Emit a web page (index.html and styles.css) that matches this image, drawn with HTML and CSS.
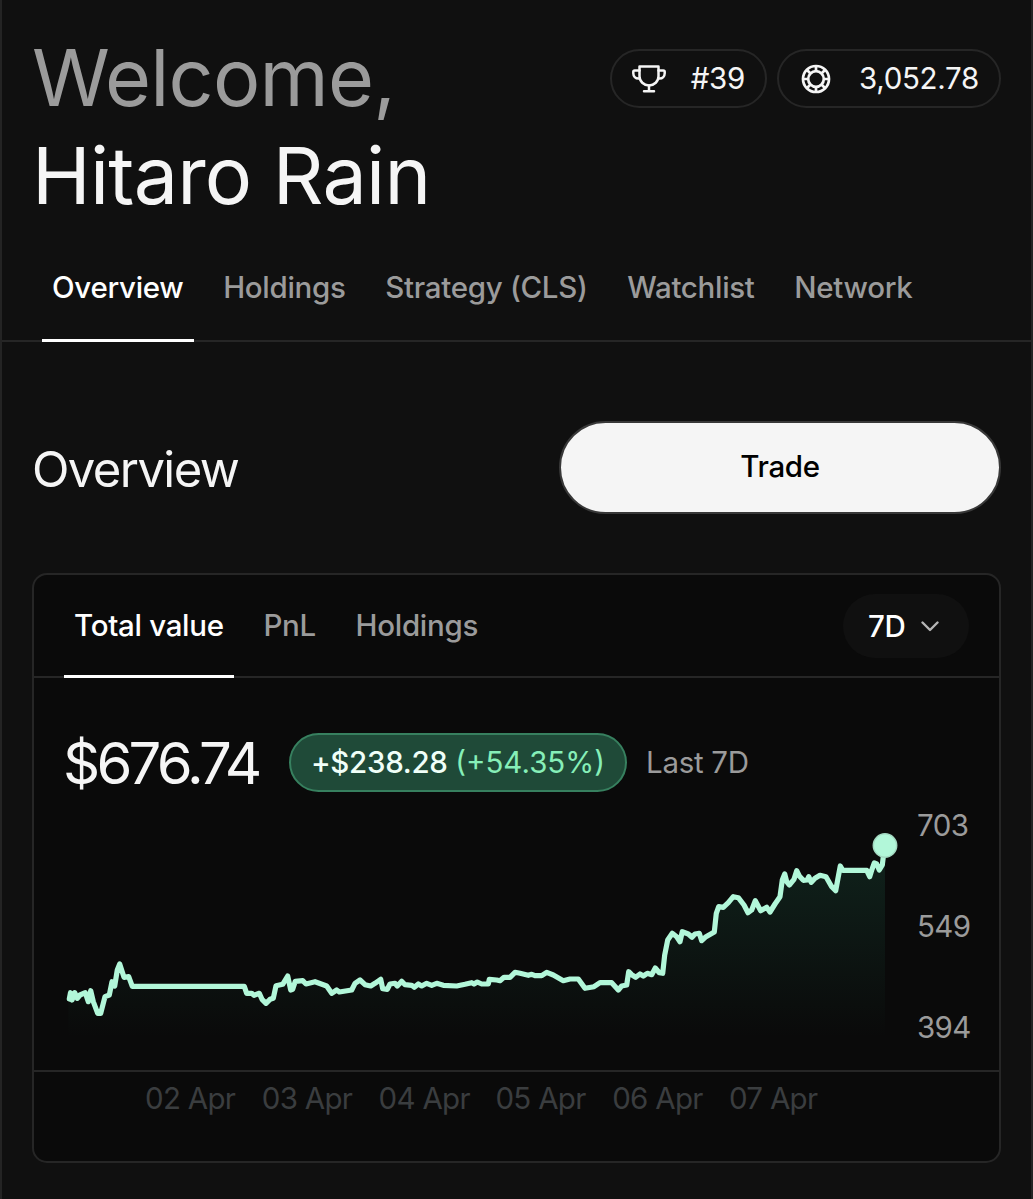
FILE: index.html
```html
<!DOCTYPE html>
<html lang="en">
<head>
    <meta charset="UTF-8">
    <meta name="viewport" content="width=device-width, initial-scale=1.0">
    <title>Portfolio</title>
    <link rel="stylesheet" href="styles.css">
</head>
<body>
    <div class="page">
        <header class="header">
            <h1 class="welcome"><span class="muted">Welcome,</span><br>Hitaro Rain</h1>
            <div class="stats">
                <div class="pill rank">
                    <svg class="trophy" viewBox="0 0 34 28" fill="none" stroke="currentColor" stroke-width="2.5" stroke-linejoin="round" stroke-linecap="round">
                        <path d="M7.5 1.6h19v9.6c0 5.2-4.2 9.2-9.5 9.2s-9.5-4-9.5-9.2z"/>
                        <path d="M7.5 5.4H2.6a1.3 1.3 0 0 0-1.3 1.3v1.6c0 3 2.2 5.2 5.2 5.2h1.2"/>
                        <path d="M26.5 5.4h4.9a1.3 1.3 0 0 1 1.3 1.3v1.6c0 3-2.2 5.2-5.2 5.2h-1.2"/>
                        <path d="M17 20.6v5.6M12 26.2h10"/>
                    </svg>
                    <span>#39</span>
                </div>
                <div class="pill points">
                    <svg class="chip" viewBox="0 0 30 30" fill="none" stroke="currentColor" stroke-width="2.7">
                        <circle cx="15" cy="15" r="13"/>
                        <circle cx="15" cy="15" r="7.8"/>
                        <path d="M15 2v5.2M15 22.8V28M2 15h5.2M22.8 15H28M5.8 5.8l3.7 3.7M20.5 20.5l3.7 3.7M24.2 5.8l-3.7 3.7M9.5 20.5l-3.7 3.7"/>
                    </svg>
                    <span>3,052.78</span>
                </div>
            </div>
        </header>

        <nav class="tabs main-tabs">
            <a class="tab active">Overview</a>
            <a class="tab">Holdings</a>
            <a class="tab">Strategy (CLS)</a>
            <a class="tab">Watchlist</a>
            <a class="tab">Network</a>
        </nav>

        <section class="title-row">
            <h2>Overview</h2>
            <button class="trade">Trade</button>
        </section>

        <section class="card">
            <div class="tabs card-tabs">
                <a class="tab active">Total value</a>
                <a class="tab">PnL</a>
                <a class="tab">Holdings</a>
                <button class="range">
                    7D
                    <svg class="chevron" viewBox="0 0 18 11" fill="none" stroke="currentColor" stroke-width="2.4" stroke-linecap="round" stroke-linejoin="round">
                        <path d="M1.5 1.5L9 9l7.5-7.5"/>
                    </svg>
                </button>
            </div>

            <div class="summary">
                <span class="total">$676.74</span>
                <span class="change">+$238.28 <em>(+54.35%)</em></span>
                <span class="period">Last 7D</span>
            </div>

            <div class="chart">
                <svg class="plot" viewBox="34 810 866 260">
                    <defs>
                        <linearGradient id="fade" gradientUnits="userSpaceOnUse" x1="0" y1="845" x2="0" y2="1037">
                            <stop offset="0" stop-color="#1d5c46" stop-opacity="0.3"/>
                            <stop offset="1" stop-color="#1d5c46" stop-opacity="0"/>
                        </linearGradient>
                        <path id="line" d="M69.3 999L70.5 992.7 72 1000 74.7 992.7 77.3 998.3 80 995 85.3 992.7 88.3 1001.7 90.7 990.7 93.3 1001.7 97.7 1013.3 100.7 1013.3 105 996.7 109.3 995 112 981.7 114.7 986 117.3 970 119.7 964 124 977.3 128.7 976.7 132.3 986.3 244.3 986.3 246.7 993.3 251.7 993.3 254 995.3 259.3 993.3 262 999.3 266 1003.3 270 999.3 273.3 998.3 276 985.7 282.7 984.3 287.7 976 290.7 990 292.7 989.3 295.3 981.3 302.7 980.7 306 984 315 981.7 326.7 986 331.7 993.3 336.7 990 339.3 992 351.7 990 355 983.3 360 980 365 984.7 370.7 986 375 983.3 380.7 979.3 382.7 988.7 387.3 989.3 390 984 395 983.3 397.3 986 401.7 981.3 405 984.7 411.7 985.3 414.3 987.3 418.3 984 421.7 986 426.7 983.3 431.7 985.3 436.7 983.3 443.3 985.3 456.7 986 465 984.3 471.7 982.7 474 984 477.3 982 481.7 984 488.3 984 489.3 979.3 496.7 980 500 980.7 504 977.3 510 977.3 515 972.3 520 973.3 528.3 975.3 531.7 974.3 535 975.7 541.7 975.7 546.7 972.3 553.3 975 563.3 980.7 570 979 578.3 979 585 988.3 594 986.7 600 982.7 611.7 982.7 618.3 990 621.7 986 626.7 985 628.7 971.7 631.7 974.7 635.7 977.3 640 974 643.3 976 647.3 973.3 651.7 974.7 655.3 968 659.3 972.7 662.7 973.3 664.7 955 667.7 940 672.3 933.3 676.7 936.7 680 941.7 682.3 931.7 688.3 934 692 937.3 695 934 699.3 933.3 701.7 940.7 706 936.7 714.3 932 716.3 913.3 718.7 906.7 723.3 907.3 728.3 902.7 733.3 896.7 738.3 897.7 744 905 748 912.7 751.7 910 755.3 900.7 760.7 910.7 766.7 907.3 770 912 775 904 780 896.7 782.3 880 784.7 874 786.7 881.7 789.3 885 794 879.3 796.7 870.7 799.3 876 803.3 880.3 807.3 880 808.7 876.7 811.3 882.3 815 878.3 820 875.3 826 876.7 831.7 886.7 835.7 890.7 838 878.3 840.3 866 842.7 870.3 866.7 870.3 869.7 876.7 872 869.3 874.3 863 876.7 864 879.3 870 882.3 865 883.3 856.7 885 845.3"/>
                        <clipPath id="under">
                            <path d="M68.3 1037V1000L70 992.7 72 1000 80 995 85.3 992.7 88.3 1001.7 90.7 990.7 97.7 1013.3 100.7 1013.3 105 996.7 109.3 995 119.7 964 124 977.3 132.3 986.3 244.3 986.3 246.7 993.3 259.3 993.3 266 1003.3 273.3 998.3 276 985.7 287.7 976 292.7 989.3 295.3 981.3 315 981.7 326.7 986 331.7 993.3 351.7 990 360 980 370.7 986 380.7 979.3 387.3 989.3 390 984 456.7 986 488.3 984 489.3 979.3 504 977.3 515 972.3 541.7 975.7 546.7 972.3 563.3 980.7 578.3 979 585 988.3 600 982.7 611.7 982.7 618.3 990 626.7 985 628.7 971.7 635.7 977.3 655.3 968 662.7 973.3 667.7 940 672.3 933.3 680 941.7 682.3 931.7 699.3 933.3 701.7 940.7 714.3 932 718.7 906.7 733.3 896.7 738.3 897.7 748 912.7 755.3 900.7 760.7 910.7 770 912 780 896.7 784.7 874 789.3 885 796.7 870.7 803.3 880.3 811.3 882.3 820 875.3 826 876.7 835.7 890.7 840.3 866 842.7 870.3 866.7 870.3 869.7 876.7 874.3 863 879.3 870 885 845.3V1037z"/>
                        </clipPath>
                    </defs>
                    <rect x="68" y="840" width="817" height="197" fill="url(#fade)" clip-path="url(#under)"/>
                    <use href="#line" class="line"/>
                    <circle cx="885" cy="845.5" r="11.7" class="dot"/>
                </svg>
                <div class="y-axis">
                    <span>703</span>
                    <span>549</span>
                    <span>394</span>
                </div>
            </div>

            <div class="x-axis">
                <span>02 Apr</span>
                <span>03 Apr</span>
                <span>04 Apr</span>
                <span>05 Apr</span>
                <span>06 Apr</span>
                <span>07 Apr</span>
            </div>
        </section>
    </div>
</body>
</html>
```
FILE: styles.css
```css
* {
    box-sizing: border-box;
}

body {
    margin: 0;
    background-color: #101010;
    color: #f5f5f5;
    font-family: Inter, sans-serif;
    font-size: 29.5px;
    letter-spacing: -0.3px;
}

h1, h2 {
    margin: 0;
    font-weight: 400;
}

button {
    font-family: inherit;
    font-size: inherit;
    letter-spacing: inherit;
    padding: 0;
    cursor: pointer;
}

svg {
    display: block;
}

.page {
    height: 1199px;
    border-left: 2px solid #242424;
    border-right: 2px solid #242424;
    overflow: hidden;
}

/* header */
.header {
    display: flex;
    justify-content: space-between;
    height: 234px;
    padding: 28px 30px 0 30px;
}

.welcome {
    font-size: 79px;
    line-height: 98px;
    letter-spacing: -0.8px;
    white-space: nowrap;
}

.muted {
    color: #9b9b9b;
}

.stats {
    display: flex;
    gap: 10px;
    margin-top: 21px;
}

.pill {
    display: flex;
    align-items: center;
    justify-content: space-between;
    height: 59px;
    padding: 0 20px;
    border: 2px solid #262626;
    border-radius: 30px;
}

.pill span {
    padding-bottom: 1px;
}

.rank {
    width: 157px;
}

.points {
    width: 224px;
}

.trophy {
    width: 34px;
    height: 28px;
}

.chip {
    width: 30px;
    height: 30px;
    margin-left: 2px;
}

/* tabs */
.tabs {
    display: flex;
    border-bottom: 2px solid #262626;
}

.tab {
    padding: 0 10px;
    margin-right: 19.7px;
    color: #9b9b9b;
    font-weight: 500;
    white-space: nowrap;
}

.active {
    color: #fff;
    border-bottom: 3px solid #fff;
    margin-bottom: -2px;
}

.main-tabs {
    height: 108px;
    padding-left: 40px;
    line-height: 106px;
}

/* title */
.title-row {
    display: flex;
    justify-content: space-between;
    align-items: center;
    height: 93px;
    margin: 79px 30px 59px;
}

.title-row h2 {
    padding-top: 3px;
    font-size: 49px;
    letter-spacing: -1.6px;
}

.trade {
    width: 442px;
    height: 93px;
    padding-bottom: 3px;
    border: 2px solid #383838;
    border-radius: 47px;
    background-color: #f5f5f5;
    color: #000;
    font-weight: 500;
}

/* card */
.card {
    height: 590px;
    margin: 0 30px;
    border: 2px solid #262626;
    border-radius: 15px;
    background-color: #0a0a0a;
}

.card-tabs {
    height: 103px;
    padding: 0 30px;
    line-height: 101px;
}

.range {
    display: flex;
    align-items: center;
    gap: 15px;
    width: 126px;
    height: 64px;
    margin: 19px 0 0 auto;
    padding: 0 0 1px 25px;
    border: 0;
    border-radius: 32px;
    background-color: #101010;
    color: #fff;
    font-weight: 500;
}

.chevron {
    width: 18px;
    height: 11px;
    margin-top: 2px;
    color: #b5b5b5;
}

.summary {
    display: flex;
    align-items: center;
    height: 59px;
    margin: 55px 30px 0;
    white-space: nowrap;
}

.total {
    width: 225px;
    margin-left: -1px;
    margin-right: 1px;
    font-size: 58px;
    letter-spacing: -3.8px;
}

.change {
    width: 338px;
    height: 59px;
    border: 2px solid #37805f;
    border-radius: 30px;
    background-color: #1f4a38;
    color: #f0fff8;
    font-weight: 500;
    line-height: 54px;
    text-align: center;
}

.change em {
    color: #86efb8;
    font-style: normal;
    font-weight: 400;
    letter-spacing: 0;
}

.period {
    margin-left: 19px;
    padding-bottom: 2px;
    color: #9b9b9b;
}

.chart {
    display: flex;
    height: 280px;
    padding-top: 18px;
    border-bottom: 2px solid #262626;
}

.plot {
    width: 866px;
    height: 260px;
}

.line {
    fill: none;
    stroke: #b2f7d9;
    stroke-width: 5.2;
    stroke-linejoin: round;
    stroke-linecap: round;
}

.dot {
    fill: #b2f7d9;
    stroke: #a3d9c1;
    stroke-width: 1.5;
}

.y-axis {
    display: flex;
    flex-direction: column;
    justify-content: space-between;
    height: 232px;
    margin-left: 17px;
    color: #9b9b9b;
    letter-spacing: -0.6px;
    line-height: 30px;
}

.x-axis {
    display: flex;
    padding: 6px 0 0 111px;
    color: #3a3d3f;
    letter-spacing: -0.7px;
    line-height: 40px;
}

.x-axis span {
    width: 116.8px;
    white-space: nowrap;
}
```
